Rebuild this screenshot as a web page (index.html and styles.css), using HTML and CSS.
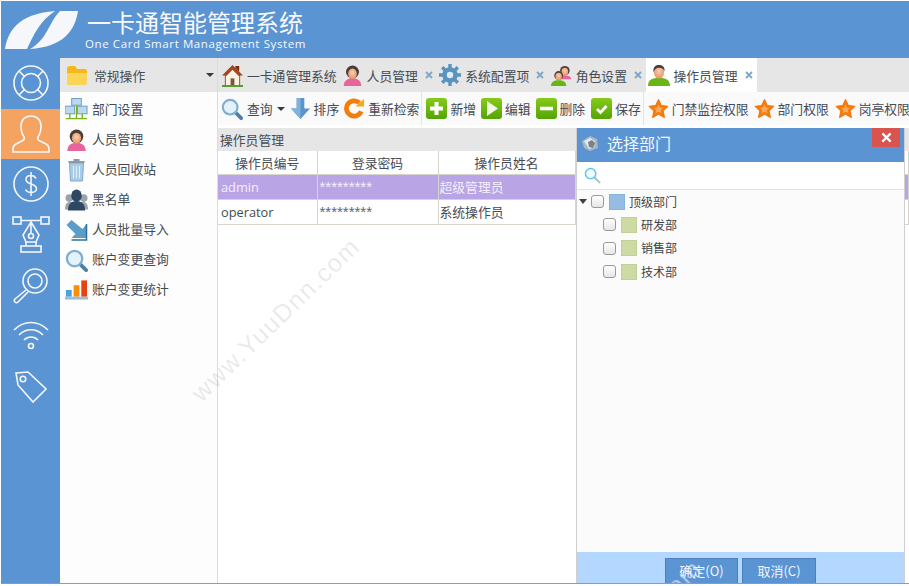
FILE: index.html
```html
<!DOCTYPE html>
<html lang="zh">
<head>
<meta charset="utf-8">
<title>一卡通智能管理系统</title>
<link rel="stylesheet" href="styles.css">
</head>
<body>
<svg class="defs" width="0" height="0">
  <defs>
    <radialGradient id="skin" cx=".5" cy=".4" r=".6"><stop offset="0" stop-color="#fbd0ae"/><stop offset="1" stop-color="#e8916a"/></radialGradient>
    <symbol id="ic-search" viewBox="0 0 24 24">
      <path d="M15 15l7 7" stroke="#4f7fa6" stroke-width="4" stroke-linecap="round" fill="none"/>
      <circle cx="10" cy="10" r="8" fill="#e3f2fb" stroke="#7fb0d2" stroke-width="2.4"/>
    </symbol>
    <symbol id="ic-woman" viewBox="0 0 24 24">
      <path d="M2 24c0-7 5-9 10-9s10 2 10 9z" fill="#e8659c"/>
      <circle cx="12" cy="8" r="7.4" fill="#4a3d38"/>
      <ellipse cx="12" cy="10" rx="5" ry="6" fill="url(#skin)"/>
    </symbol>
    <symbol id="ic-man" viewBox="0 0 24 24">
      <path d="M0 24c0-7 5-9 12-9s12 2 12 9z" fill="#68b514"/>
      <ellipse cx="12" cy="9" rx="5.5" ry="7" fill="url(#skin)"/>
      <path d="M6 9c-1-6 3-8 6-8s7 2 6 7c-1-3-3-4-6-4s-5 2-6 5z" fill="#4a3d38"/>
    </symbol>
    <symbol id="ic-star" viewBox="0 0 24 24">
      <path d="M12 1.500l3.300 7 7.700 1-5.600 5.300 1.500 7.700L12 18.700 5.100 22.500l1.500-7.700L1 9.500l7.700-1z" fill="#f97b07" stroke="#f26d02" stroke-linejoin="round"/>
      <path d="M12 7.500l1.600 3.300 3.600.5-2.600 2.500.7 3.600-3.300-1.800-3.300 1.800.7-3.600-2.600-2.500 3.600-.5z" fill="#fba95c"/>
    </symbol>
    <symbol id="ic-x" viewBox="0 0 8 8">
      <path d="M1 1l6 6M7 1l-6 6" stroke="#7ea6c9" stroke-width="1.800"/>
    </symbol>
  </defs>
</svg>

<div class="app">
  <header class="header">
    <svg class="logo" viewBox="0 0 74 40" width="74" height="40">
      <path d="M0 39C3 22 12 4 50 1 35 11 29 24 22 39z" fill="#f6f7fb"/>
      <path d="M73 1C70 21 58 37 25 39 42 30 44 12 55 1z" fill="#f6f7fb"/>
    </svg>
    <div class="brand">
      <div class="brand-cn">一卡通智能管理系统</div>
      <div class="brand-en">One Card Smart Management System</div>
    </div>
  </header>

  <div class="body">
    <nav class="rail">
      <a class="rail-item">
        <svg viewBox="0 0 36 36" width="36" height="36" class="rail-ic"><circle cx="18" cy="18" r="17"/><circle cx="18" cy="18" r="9.500"/><path d="M6 6l6 6M30 6l-6 6M6 30l6-6M30 30l-6-6"/></svg>
      </a>
      <a class="rail-item rail-active">
        <svg viewBox="0 0 38 38" width="38" height="38" class="rail-ic"><path d="M12 22c-2-3-3-7-3-11C9 5 13 1 19 1s10 4 10 10c0 4-1 8-3 11-1 2 0 3 2 4l6 3c2 1 3 3 3 5v3H1v-3c0-2 1-4 3-5l6-3c2-1 3-2 2-4z"/></svg>
      </a>
      <a class="rail-item">
        <svg viewBox="0 0 36 36" width="36" height="36" class="rail-ic"><circle cx="18" cy="18" r="17"/><path d="M23 12.500c-1-2-3-3-5-3-3 0-5 1.500-5 4s2 3.500 5 4.500 5.500 2 5.500 4.500-2.500 4-5.500 4c-2.500 0-4.500-1-5.500-3M18 6v24"/></svg>
      </a>
      <a class="rail-item">
        <svg viewBox="0 0 38 38" width="38" height="38" class="rail-ic"><rect x="1" y="1" width="8" height="7"/><rect x="29" y="1" width="8" height="7"/><path d="M9 4.500h20M19 6l8 13-3 7H14l-3-7zM19 6v11.500"/><circle cx="19" cy="20" r="2.500"/><rect x="9" y="30" width="20" height="6"/><path d="M14 26v4M24 26v4"/></svg>
      </a>
      <a class="rail-item">
        <svg viewBox="0 0 36 36" width="36" height="36" class="rail-ic"><circle cx="22" cy="13" r="12"/><circle cx="22" cy="13" r="7"/><path d="M13 22L2 31c-1 1-1 2 0 3s2 1 3 0l10-10"/></svg>
      </a>
      <a class="rail-item">
        <svg viewBox="0 0 36 30" width="36" height="30" class="rail-ic"><path d="M1 9c10-10 24-10 34 0M6 14c7-7 17-7 24 0M11 19c4-4 10-4 14 0"/><circle cx="18" cy="25" r="2.500"/></svg>
      </a>
      <a class="rail-item">
        <svg viewBox="0 0 32 32" width="32" height="32" class="rail-ic"><path d="M1 2l12-1 18 17-13 13L3 14z"/><circle cx="8" cy="8" r="2.800"/></svg>
      </a>
    </nav>

    <aside class="menu">
      <div class="menu-head">
        <svg viewBox="0 0 22 22" width="22" height="22"><path d="M1 5c0-2 1-3 3-3h5l2 3h8c1 0 2 1 2 2v11c0 2-1 3-3 3H4c-2 0-3-1-3-3z" fill="#f5b81c"/><path d="M1 9h20v9c0 2-1 3-3 3H4c-2 0-3-1-3-3z" fill="#fcd556"/></svg>
        <span class="menu-head-label">常规操作</span>
        <span class="caret"></span>
      </div>
      <ul class="menu-list">
        <li class="menu-item">
          <svg viewBox="0 0 24 24" width="24" height="24"><rect x="7" y="0" width="10" height="7" fill="#bcd8ee" stroke="#6d9cc2"/><rect x="0" y="8" width="10" height="8" fill="#bcd8ee" stroke="#6d9cc2"/><rect x="13" y="8" width="10" height="8" fill="#bcd8ee" stroke="#6d9cc2"/><path d="M1 21h22M5 16v5M18 16v5M12 7v14" stroke="#7cb518" stroke-width="1.500" fill="none"/></svg>
          <span>部门设置</span>
        </li>
        <li class="menu-item">
          <svg width="22" height="22"><use href="#ic-woman"/></svg>
          <span>人员管理</span>
        </li>
        <li class="menu-item">
          <svg viewBox="0 0 18 24" width="18" height="24"><path d="M2 5h14l-1 18H3z" fill="#a9cde8" stroke="#7ea9c8"/><path d="M6 8v12M9 8v12M12 8v12" stroke="#e4f0f9"/><path d="M1 3h16v2H1zM6 1h6v2H6z" fill="#8a9aa8"/></svg>
          <span>人员回收站</span>
        </li>
        <li class="menu-item">
          <svg viewBox="0 0 24 22" width="24" height="22"><circle cx="4.500" cy="9" r="4" fill="#9aa2aa"/><circle cx="19.500" cy="9" r="4" fill="#9aa2aa"/><path d="M0 21c0-6 2-8 5-8h14c3 0 5 2 5 8z" fill="#9aa2aa"/><ellipse cx="12" cy="6.500" rx="5.500" ry="6.500" fill="#2e4763"/><path d="M3 22c0-7 4-10 9-10s9 3 9 10z" fill="#2e4763"/></svg>
          <span>黑名单</span>
        </li>
        <li class="menu-item">
          <svg viewBox="0 0 22 22" width="22" height="22"><path d="M6 1L1 6l9 9-4 4h15V5l-4 5z" fill="#5b9cc9"/><path d="M21 5v16H6" fill="none" stroke="#2f6f9c" stroke-width="1.500"/></svg>
          <span>人员批量导入</span>
        </li>
        <li class="menu-item">
          <svg width="23" height="23"><use href="#ic-search"/></svg>
          <span>账户变更查询</span>
        </li>
        <li class="menu-item">
          <svg viewBox="0 0 24 22" width="24" height="22"><rect x="1" y="11" width="6" height="7" fill="#4aa3df"/><rect x="9" y="6" width="6" height="12" fill="#fb8c0c"/><rect x="17" y="1" width="6" height="17" fill="#e8410f"/><rect x="0" y="18" width="24" height="3" fill="#9cbfd8"/></svg>
          <span>账户变更统计</span>
        </li>
      </ul>
    </aside>

    <main class="main">
      <div class="tabs">
        <div class="tab tab-home">
          <svg viewBox="0 0 22 24" width="21" height="23"><path d="M11 1L0 12h3v11h16V12h3z" fill="#a8431c"/><path d="M14 2h4v6l-4-4z" fill="#7b2d10"/><path d="M4 13l7-7 7 7v10H4z" fill="#fbf3e6"/><rect x="9" y="15" width="4" height="8" fill="#7a5a33"/><rect x="0" y="22" width="22" height="2" fill="#4d9a2a"/></svg>
          <span>一卡通管理系统</span>
        </div>
        <div class="tab">
          <svg width="21" height="21"><use href="#ic-woman"/></svg>
          <span>人员管理</span>
          <svg class="tab-x" width="8" height="8"><use href="#ic-x"/></svg>
        </div>
        <div class="tab">
          <svg viewBox="0 0 22 22" width="22" height="22"><circle cx="11" cy="11" r="5.500" fill="#dfeaf3" stroke="#5a93bd" stroke-width="4.500"/><path d="M11 0v5M11 17v5M0 11h5M17 11h5M3.200 3.200l3.500 3.500M15.300 15.300l3.500 3.500M18.800 3.200l-3.500 3.500M3.200 18.800l3.500-3.500" stroke="#5a93bd" stroke-width="3.400"/></svg>
          <span>系统配置项</span>
          <svg class="tab-x" width="8" height="8"><use href="#ic-x"/></svg>
        </div>
        <div class="tab">
          <svg viewBox="0 0 22 22" width="21" height="21"><circle cx="14.500" cy="6" r="5" fill="#4a3d38"/><ellipse cx="14.500" cy="7" rx="3.500" ry="4" fill="url(#skin)"/><path d="M8 15c0-3 3-4 6.500-4s6.500 1 6.500 4z" fill="#e8659c"/><circle cx="8" cy="11" r="4.600" fill="#4a3d38"/><ellipse cx="8" cy="12" rx="3.400" ry="3.800" fill="url(#skin)"/><path d="M0 22c0-4 3-6 8-6s8 2 8 6z" fill="#68b514"/></svg>
          <span>角色设置</span>
          <svg class="tab-x" width="8" height="8"><use href="#ic-x"/></svg>
        </div>
        <div class="tab tab-active">
          <svg width="22" height="22"><use href="#ic-man"/></svg>
          <span>操作员管理</span>
          <svg class="tab-x" width="8" height="8"><use href="#ic-x"/></svg>
        </div>
      </div>

      <div class="toolbar">
        <div class="tool tool-query">
          <svg width="22" height="22"><use href="#ic-search"/></svg>
          <span>查询</span><span class="caret"></span>
        </div>
        <div class="tool">
          <svg viewBox="0 0 22 24" width="21" height="23"><path d="M7 1h8v11h6L11 23 1 12h6z" fill="#5b94c8"/><path d="M7 1h4v22L1 12h6z" fill="#7fb2dc"/></svg>
          <span>排序</span>
        </div>
        <div class="tool">
          <svg viewBox="0 0 22 22" width="21" height="21"><path d="M18 14a8 8 0 1 1-2-9" fill="none" stroke="#f57c0a" stroke-width="5"/><path d="M12 9h9V1z" fill="#fba61a"/></svg>
          <span>重新检索</span>
        </div>
        <i class="sep"></i>
        <div class="tool">
          <span class="gbtn"><svg viewBox="0 0 21 21" width="21" height="21"><path d="M10.500 4v13M4 10.500h13" stroke="#fff" stroke-width="4"/></svg></span>
          <span>新增</span>
        </div>
        <div class="tool">
          <span class="gbtn"><svg viewBox="0 0 21 21" width="21" height="21"><path d="M6 3l11 7.500L6 18z" fill="#f2f8e4"/></svg></span>
          <span>编辑</span>
        </div>
        <div class="tool">
          <span class="gbtn"><svg viewBox="0 0 21 21" width="21" height="21"><path d="M4 10.500h13" stroke="#fff" stroke-width="3.600"/></svg></span>
          <span>删除</span>
        </div>
        <div class="tool tool-save">
          <span class="gbtn"><svg viewBox="0 0 21 21" width="21" height="21"><path d="M6 11l3.500 3.500L15.500 8" stroke="#fff" stroke-width="2.800" fill="none"/></svg></span>
          <span>保存</span>
        </div>
        <i class="sep"></i>
        <div class="tool">
          <svg width="21" height="21"><use href="#ic-star"/></svg>
          <span>门禁监控权限</span>
        </div>
        <div class="tool">
          <svg width="21" height="21"><use href="#ic-star"/></svg>
          <span>部门权限</span>
        </div>
        <div class="tool tool-last">
          <svg width="21" height="21"><use href="#ic-star"/></svg>
          <span>岗亭权限</span>
        </div>
      </div>

      <div class="panel">
        <div class="panel-title">操作员管理</div>
        <table class="grid">
          <colgroup><col class="col-a"><col class="col-b"><col class="col-c"><col></colgroup>
          <thead>
            <tr><th>操作员编号</th><th>登录密码</th><th>操作员姓名</th><th></th></tr>
          </thead>
          <tbody>
            <tr class="row-on"><td class="code">admin</td><td class="pwd">*********</td><td>超级管理员</td><td></td></tr>
            <tr><td class="code">operator</td><td class="pwd">*********</td><td>系统操作员</td><td></td></tr>
          </tbody>
        </table>
      </div>
    </main>
  </div>

  <div class="wm wm-main">www.YuuDnn.com</div>

  <section class="dialog">
    <div class="dlg-head">
      <svg viewBox="0 0 16 16" width="16" height="16"><path d="M0 6l8-5 7 3 1 9-8 3-6-3z" fill="#aab6c2"/><path d="M2 6l6-3 5 3-1 6-5 2z" fill="#e3e8ec"/><path d="M6 7l4-2 3 3-2 5-4-1z" fill="#74838f"/></svg>
      <span class="dlg-title">选择部门</span>
      <button class="dlg-close" type="button"><svg viewBox="0 0 12 12" width="11" height="11"><path d="M1.500 1.500l9 9M10.500 1.500l-9 9" stroke="#fff" stroke-width="2.400"/></svg></button>
    </div>
    <div class="dlg-search">
      <svg viewBox="0 0 18 18" width="17" height="17"><path d="M11 11l6 6" stroke="#b4c4d0" stroke-width="2.400"/><circle cx="7" cy="7" r="5.500" fill="#f4fbff" stroke="#5cc8f5" stroke-width="1.600"/></svg>
    </div>
    <div class="tree">
      <div class="node node-root">
        <span class="tree-caret"></span><span class="check"></span><span class="swatch swatch-blue"></span><span>顶级部门</span>
      </div>
      <div class="node node-child"><span class="check"></span><span class="swatch"></span><span>研发部</span></div>
      <div class="node node-child"><span class="check"></span><span class="swatch"></span><span>销售部</span></div>
      <div class="node node-child"><span class="check"></span><span class="swatch"></span><span>技术部</span></div>
    </div>
    <div class="dlg-foot">
      <button class="dlg-btn" type="button">确定(O)</button>
      <button class="dlg-btn dlg-cancel" type="button">取消(C)</button>
    </div>
  </section>

  <div class="wm wm-foot">www.YuuDnn.com</div>
</div>
</body>
</html>
```
FILE: styles.css
```css
* { box-sizing: border-box; }
html, body { margin: 0; padding: 0; height: 100%; overflow: hidden; background: #fff; }
body { font-family: "Noto Sans CJK SC", "Noto Sans", sans-serif; color: #444b55; font-size: 12.800px; }
.defs { position: absolute; }
svg { display: block; flex: none; }

.app { position: relative; width: 908px; height: 582px; margin-left: 1px; margin-top: 1px; overflow: hidden; display: flex; flex-direction: column; background: #fff; box-shadow: 0 1px 0 #9a9a9a; }

.header { height: 57px; flex: none; background: #5b94d3; display: flex; align-items: center; padding: 0 0 3px 4px; color: #fff; }
.logo { margin-right: 7px; margin-top: 3px; }
.brand { margin-top: 2px; display: flex; flex-direction: column; }
.brand-cn { font-size: 24px; line-height: 29px; margin-left: 1px; color: #f7f9fd; }
.brand-en { font-family: "Open Sans", sans-serif; font-size: 11.500px; line-height: 16px; letter-spacing: .6px; margin-left: -1px; color: #f4f8fd; }

.body { flex: 1; display: flex; min-height: 0; }

.rail { width: 59px; flex: none; background: #5b94d3; display: flex; flex-direction: column; }
.rail-item { height: 50.600px; flex: none; display: flex; align-items: center; justify-content: center; }
.rail-active { background: #f4a460; }
.rail-ic { fill: none; stroke: #f4f7fc; stroke-width: 1.600; }

.menu { width: 158px; flex: none; background: #fdfdfd; border-right: 1px solid #dcdcdc; display: flex; flex-direction: column; }
.menu-head { height: 34px; flex: none; background: #e6e6e6; display: flex; align-items: center; padding: 0 3px 0 6px; }
.menu-head-label { margin-left: 6px; flex: 1; }
.menu-list { list-style: none; margin: 3px 0 0; padding: 0; }
.menu-item { height: 30px; display: flex; align-items: center; padding-left: 5px; gap: 4px; }
.menu-item > svg { width: 23px; }
.menu-item > span { padding-bottom: 3px; }
.caret { display: inline-block; width: 0; height: 0; border: 4px solid transparent; border-top: 4px solid #333a44; border-bottom: 0; flex: none; }

.main { flex: 1; min-width: 0; display: flex; flex-direction: column; background: #fff; }
.tabs { height: 34px; flex: none; background: #e6e6e6; display: flex; align-items: center; padding-left: 4px; }
.tab { height: 100%; display: flex; align-items: center; gap: 4px; padding-right: 6.500px; white-space: nowrap; }
.tab-home { padding-right: 5px; }
.tab-x { margin-left: 3px; }
.tab-active { background: #fff; padding: 0 0 0 2px; margin-left: -2px; width: 111px; gap: 3px; }
.tab-active .tab-x { margin-left: 5px; }

.toolbar { height: 33px; flex: none; background: #fafafa; display: flex; align-items: center; padding-left: 3px; gap: 5px; white-space: nowrap; overflow: hidden; }
.tool { display: flex; align-items: center; gap: 3px; flex: none; }
.tool-query { gap: 4px; }
.tool-save { margin-left: 1px; }
.tool-last { margin-left: 1px; }
.sep { width: 1px; height: 33px; background: #e4e4e4; margin: 0 -1px 0 -3px; flex: none; }
.gbtn { width: 21px; height: 21px; border-radius: 3px; background: linear-gradient(#86cb1a, #54a306); display: block; flex: none; }

.panel { flex: 1; margin-top: 3px; min-height: 0; }
.panel-title { height: 23px; background: #e6e6e6; line-height: 24px; padding-left: 2px; }
.grid { width: 100%; border-collapse: collapse; table-layout: fixed; background: #fff; }
.col-a { width: 99px; }
.col-b { width: 121px; }
.col-c { width: 137px; }
.grid th { height: 23px; font-weight: 400; text-align: center; border-right: 1px solid #d8d4cc; border-bottom: 1px solid #d8d4cc; padding: 0; }
.grid td { height: 25px; padding: 0 1px; border-right: 1px solid #d8d4cc; border-bottom: 1px solid #d8d4cc; white-space: nowrap; }
.grid .code { font-family: "Open Sans", sans-serif; padding-left: 3px; }
.grid .pwd { font-family: "Liberation Sans", sans-serif; font-size: 15px; padding-left: 2px; color: #5c6672; }
.row-on td { background: #b9a5e6; color: #f3effb; }
.grid .row-on .pwd { color: #f3effb; }

.wm { position: absolute; font-family: "Liberation Sans", sans-serif; font-size: 25px; letter-spacing: 1.400px; color: rgba(120, 120, 120, .16); transform: rotate(-44deg); white-space: nowrap; pointer-events: none; width: 229px; text-align: center; }
.wm-main { left: 160px; top: 304px; }
.wm-foot { left: 502px; top: 626px; color: rgba(235, 238, 242, .6); }

.dialog { position: absolute; left: 575px; top: 127px; width: 329px; bottom: 0; background: #fbfbfb; border-left: 1px solid #cfcfcf; border-right: 1px solid #cfcfcf; display: flex; flex-direction: column; }
.dlg-head { height: 34px; flex: none; background: #5b94d3; position: relative; display: flex; align-items: center; padding: 0 0 5px 5px; color: #f4f8fd; }
.dlg-title { font-size: 16px; margin-left: 9px; }
.dlg-close { position: absolute; right: 4px; top: 0; width: 28px; height: 19px; background: #d9534f; border: 0; padding: 0; display: flex; align-items: center; justify-content: center; }
.dlg-search { height: 28px; flex: none; background: #fff; border-bottom: 1px solid #e2e2e2; display: flex; align-items: center; padding-left: 7px; }
.tree { flex: 1; padding-top: 0; color: #3d4249; font-size: 12px; }
.node { height: 23.300px; display: flex; align-items: center; }
.node > span:last-child { padding-bottom: 1px; }
.node-root { padding-left: 2px; }
.node-child { padding-left: 26px; }
.tree-caret { width: 0; height: 0; border: 4px solid transparent; border-top: 5px solid #3d4249; border-bottom: 0; margin-right: 4px; flex: none; }
.check { width: 13px; height: 13px; border: 1px solid #9a9a9a; border-radius: 3px; background: linear-gradient(#fff, #e6e6e6); margin-right: 5px; flex: none; }
.swatch { width: 16px; height: 16px; background: #cddaa3; border: 1px solid #c1cf98; margin-right: 4px; flex: none; }
.swatch-blue { background: #95bce3; border-color: #8ab3dc; }
.dlg-foot { height: 31px; flex: none; background: #b3d7ff; display: flex; justify-content: center; gap: 4px; padding: 6px 0 0; overflow: hidden; }
.dlg-btn { width: 73px; height: 30px; flex: none; background: #5b94d3; color: #f1f6fc; border: 1px solid #4a80bd; padding: 0 0 5px; font: 13px "Noto Sans CJK SC", sans-serif; }
.dlg-cancel { width: 74px; }
```
